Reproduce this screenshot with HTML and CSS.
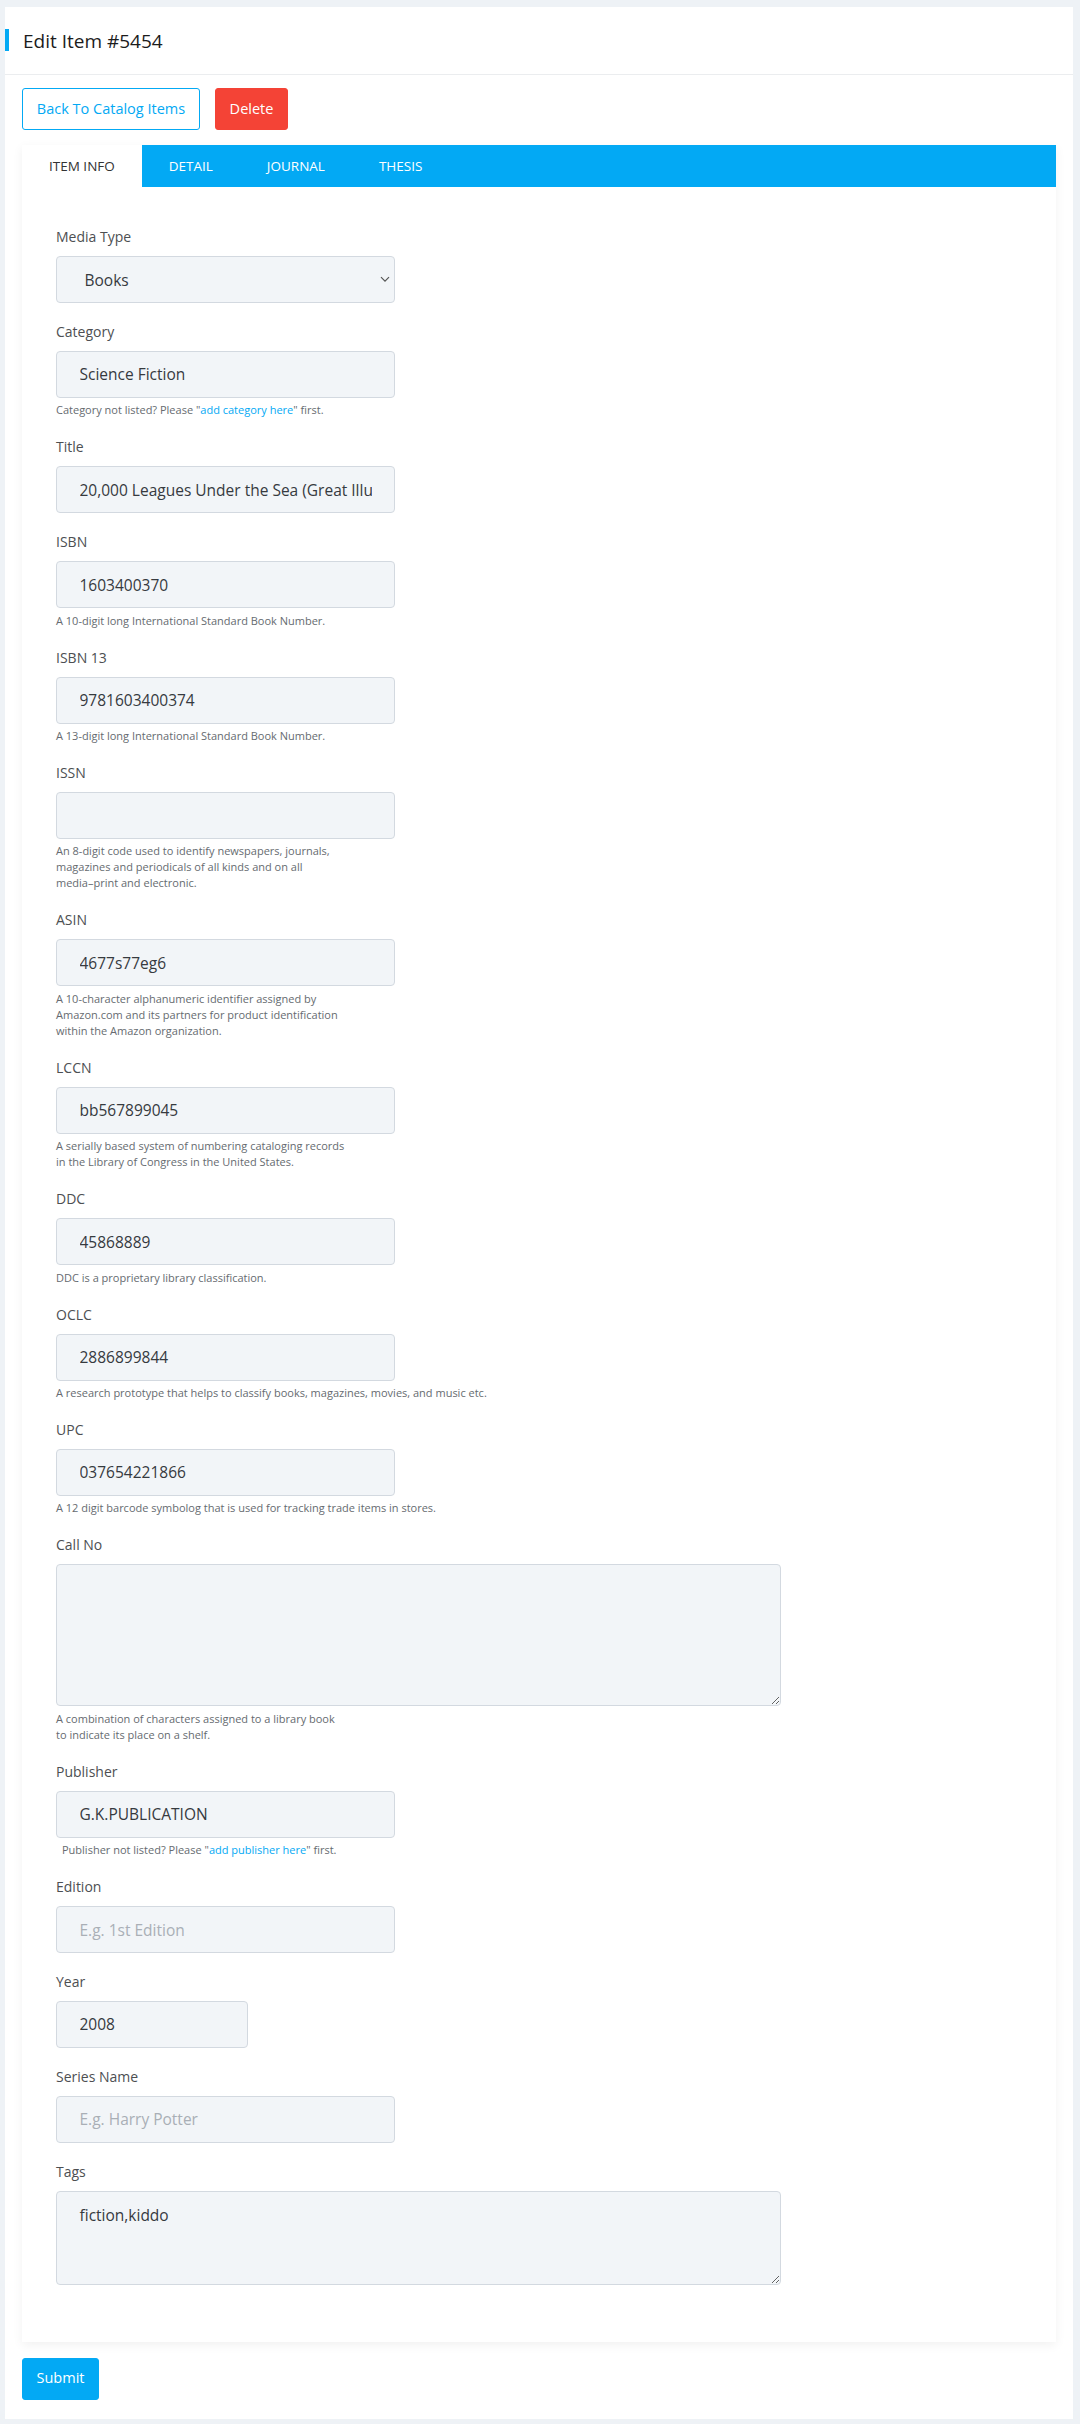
FILE: index.html
```html
<!DOCTYPE html>
<html lang="en">
<head>
<meta charset="utf-8">
<title>Edit Item #5454</title>
<link rel="stylesheet" href="styles.css">
</head>
<body>
<div class="page">
  <header class="page-header">
    <span class="accent"></span>
    <h1 class="page-title">Edit Item #5454</h1>
  </header>
  <div class="page-body">
    <div class="actions">
      <button class="btn btn-outline" type="button">Back To Catalog Items</button>
      <button class="btn btn-danger" type="button">Delete</button>
    </div>
    <div class="panel">
      <nav class="tabs">
        <span class="tab active">ITEM INFO</span>
        <span class="tab">DETAIL</span>
        <span class="tab">JOURNAL</span>
        <span class="tab">THESIS</span>
      </nav>
      <form class="form">
        <div class="group">
          <label class="label">Media Type</label>
          <div class="select-wrap">
            <select class="control select"><option>Books</option></select>
            <svg class="chevron" width="10" height="7" viewBox="0 0 10 7"><path d="M1 1.2 L5 5.2 L9 1.2" fill="none" stroke="#555" stroke-width="1.2"/></svg>
          </div>
        </div>
        <div class="group">
          <label class="label">Category</label>
          <input class="control" type="text" value="Science Fiction">
          <p class="hint">Category not listed? Please "<a class="link">add category here</a>" first.</p>
        </div>
        <div class="group">
          <label class="label">Title</label>
          <input class="control" type="text" value="20,000 Leagues Under the Sea (Great Illustrated Classics)">
        </div>
        <div class="group">
          <label class="label">ISBN</label>
          <input class="control" type="text" value="1603400370">
          <p class="hint">A 10-digit long International Standard Book Number.</p>
        </div>
        <div class="group">
          <label class="label">ISBN 13</label>
          <input class="control" type="text" value="9781603400374">
          <p class="hint">A 13-digit long International Standard Book Number.</p>
        </div>
        <div class="group">
          <label class="label">ISSN</label>
          <input class="control" type="text" value="">
          <p class="hint">An 8-digit code used to identify newspapers, journals,<br>magazines and periodicals of all kinds and on all<br>media–print and electronic.</p>
        </div>
        <div class="group">
          <label class="label">ASIN</label>
          <input class="control" type="text" value="4677s77eg6">
          <p class="hint">A 10-character alphanumeric identifier assigned by<br>Amazon.com and its partners for product identification<br>within the Amazon organization.</p>
        </div>
        <div class="group">
          <label class="label">LCCN</label>
          <input class="control" type="text" value="bb567899045">
          <p class="hint">A serially based system of numbering cataloging records<br>in the Library of Congress in the United States.</p>
        </div>
        <div class="group">
          <label class="label">DDC</label>
          <input class="control" type="text" value="45868889">
          <p class="hint">DDC is a proprietary library classification.</p>
        </div>
        <div class="group">
          <label class="label">OCLC</label>
          <input class="control" type="text" value="2886899844">
          <p class="hint">A research prototype that helps to classify books, magazines, movies, and music etc.</p>
        </div>
        <div class="group">
          <label class="label">UPC</label>
          <input class="control" type="text" value="037654221866">
          <p class="hint">A 12 digit barcode symbolog that is used for tracking trade items in stores.</p>
        </div>
        <div class="group">
          <label class="label">Call No</label>
          <textarea class="control area area-call" spellcheck="false"></textarea>
          <p class="hint">A combination of characters assigned to a library book<br>to indicate its place on a shelf.</p>
        </div>
        <div class="group">
          <label class="label">Publisher</label>
          <input class="control" type="text" value="G.K.PUBLICATION">
          <p class="hint hint-indent">Publisher not listed? Please "<a class="link">add publisher here</a>" first.</p>
        </div>
        <div class="group">
          <label class="label">Edition</label>
          <input class="control" type="text" placeholder="E.g. 1st Edition">
        </div>
        <div class="group">
          <label class="label">Year</label>
          <input class="control control-short" type="text" value="2008">
        </div>
        <div class="group">
          <label class="label">Series Name</label>
          <input class="control" type="text" placeholder="E.g. Harry Potter">
        </div>
        <div class="group">
          <label class="label">Tags</label>
          <textarea class="control area area-tags" spellcheck="false">fiction,kiddo</textarea>
        </div>
      </form>
    </div>
    <button class="btn btn-primary" type="button">Submit</button>
  </div>
</div>
</body>
</html>
```

FILE: styles.css
```css
* { box-sizing: border-box; }

html, body {
  margin: 0;
  padding: 0;
}

body {
  background: #eef2f6;
  padding: 7px 7px 5px 5px;
  font-family: "Open Sans", "Noto Sans", sans-serif;
  color: #333;
}

.page {
  background: #ffffff;
}

.page-header {
  position: relative;
  height: 68px;
  display: flex;
  align-items: center;
  border-bottom: 1px solid #ebedef;
}

.accent {
  position: absolute;
  left: 0;
  top: 22px;
  width: 4px;
  height: 22px;
  background: #03a9f4;
}

.page-title {
  margin: 0 0 0 18px;
  font-size: 19px;
  font-weight: 400;
  color: #1c1c1c;
  line-height: 24px;
}

.page-body {
  padding: 13px 17px 19px 17px;
}

.actions {
  display: flex;
  gap: 15px;
  margin-bottom: 15px;
}

.btn {
  height: 42px;
  font-family: "Open Sans", "Noto Sans", sans-serif;
  font-size: 14.5px;
  border-radius: 3px;
  padding: 0;
  cursor: pointer;
  line-height: 1;
  white-space: nowrap;
  text-align: center;
}

.btn-outline {
  background: #fff;
  color: #03a9f4;
  border: 1px solid #03a9f4;
  width: 178px;
}

.btn-danger {
  background: #f44336;
  color: #fff;
  border: 1px solid #f44336;
  width: 73px;
}

.btn-primary {
  background: #03a9f4;
  color: #fff;
  border: 1px solid #03a9f4;
  width: 77px;
  margin-top: 16px;
  display: block;
}

.panel {
  background: #fff;
  box-shadow: 0 3px 10px rgba(0, 0, 0, 0.06);
}

.tabs {
  display: flex;
  height: 42px;
  background: #03a9f4;
}

.tab {
  display: flex;
  align-items: center;
  padding: 0 27px;
  font-size: 13.5px;
  color: #ffffff;
}

.tab.active {
  background: #fff;
  color: #333;
}

.form {
  padding: 40px 34px 38px 34px;
}

.group {
  margin-bottom: 18.9px;
}

.label {
  display: block;
  font-size: 14px;
  line-height: 20px;
  color: #4d4f52;
  margin-bottom: 9px;
}

.control {
  display: block;
  width: 339px;
  height: 47px;
  margin: 0;
  padding: 0 22.5px;
  background: #f2f5f8;
  border: 1px solid #d3d9e0;
  border-radius: 4px;
  font-family: "Open Sans", "Noto Sans", sans-serif;
  font-size: 15.5px;
  color: #363a3f;
  outline: none;
}

.control::placeholder {
  color: #a9afb6;
}

.control-short {
  width: 192px;
}

.select-wrap {
  position: relative;
  width: 339px;
}

.select {
  appearance: none;
  -webkit-appearance: none;
  padding-left: 27.5px;
}

.chevron {
  position: absolute;
  right: 5px;
  top: 20px;
}

.area {
  width: 725px;
  padding: 11px 22.5px;
  line-height: 24px;
  resize: both;
}

.area-call {
  height: 142px;
}

.area-tags {
  height: 94px;
}

.hint {
  margin: 4.5px 0 0 0;
  font-size: 11px;
  line-height: 16px;
  color: #666b70;
}

.hint-indent {
  padding-left: 6px;
}

.link {
  color: #03a9f4;
  text-decoration: none;
}
```
